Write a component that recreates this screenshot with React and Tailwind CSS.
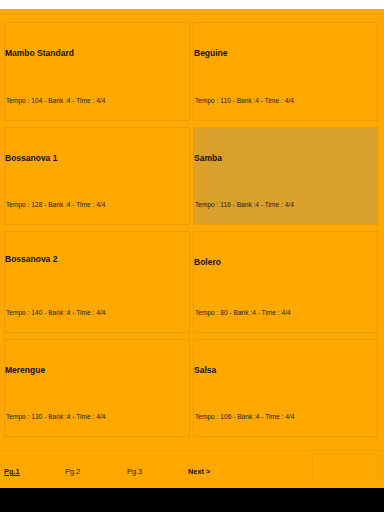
import React from "react";

const cards = [
  { name: "Mambo Standard", tempo: 104, h: "h-[99px]" },
  { name: "Beguine", tempo: 110, h: "h-[99px]" },
  { name: "Bossanova 1", tempo: 128, h: "h-[98px]" },
  { name: "Samba", tempo: 116, h: "h-[98px]", active: true },
  { name: "Bossanova 2", tempo: 140, h: "h-[102px]", tOff: "mt-[21px]" },
  { name: "Bolero", tempo: 80, h: "h-[102px]" },
  { name: "Merengue", tempo: 130, h: "h-[98px]" },
  { name: "Salsa", tempo: 106, h: "h-[98px]" },
];

function Card({ c }) {
  return (
    <div
      className={`${c.h} border border-[#e99c0c] flex flex-col ${
        c.active ? "bg-[#d9a12b]" : "bg-[#ffa900]"
      }`}
    >
      <div
        className={`${c.tOff || "mt-[24px]"} h-[12px] leading-[12px] text-[8.5px] font-bold text-[#111]`}
      >
        {c.name}
      </div>
      <div className="mt-auto mb-[14px] pl-[1px] h-[10px] leading-[10px] text-[6.6px] text-[#222]">
        Tempo : {c.tempo} - Bank :4 - Time : 4/4
      </div>
    </div>
  );
}

export default function App() {
  return (
    <div
      className="w-[384px] h-[512px] flex flex-col bg-black overflow-hidden"
      style={{ fontFamily: '"Liberation Sans", Arial, sans-serif' }}
    >
      <div className="h-[9px] bg-white shrink-0" />
      <div className="bg-[#ffa900] shrink-0 h-[479px] flex flex-col">
        <div className="pt-[13px] pl-[4px] grid grid-cols-[186px_185px] gap-x-[3px] gap-y-[6px]">
          {cards.map((c) => (
            <Card key={c.name} c={c} />
          ))}
        </div>
        <div className="mt-[13px] border-t border-[#f5a300] flex-1 flex items-center pl-[4px] pr-[5px]">
          <div className="flex items-center text-[7.4px] text-[#222] flex-1 mt-[4px]">
            <span className="w-[61px] font-bold underline">Pg.1</span>
            <span className="w-[62px]">Pg.2</span>
            <span className="w-[61px]">Pg.3</span>
            <span className="font-bold text-[#111]">Next &gt;</span>
          </div>
          <div className="w-[67px] h-[28px] border border-[#f0a20a] mb-[4px]" />
        </div>
      </div>
      <div className="flex-1 bg-black" />
    </div>
  );
}
